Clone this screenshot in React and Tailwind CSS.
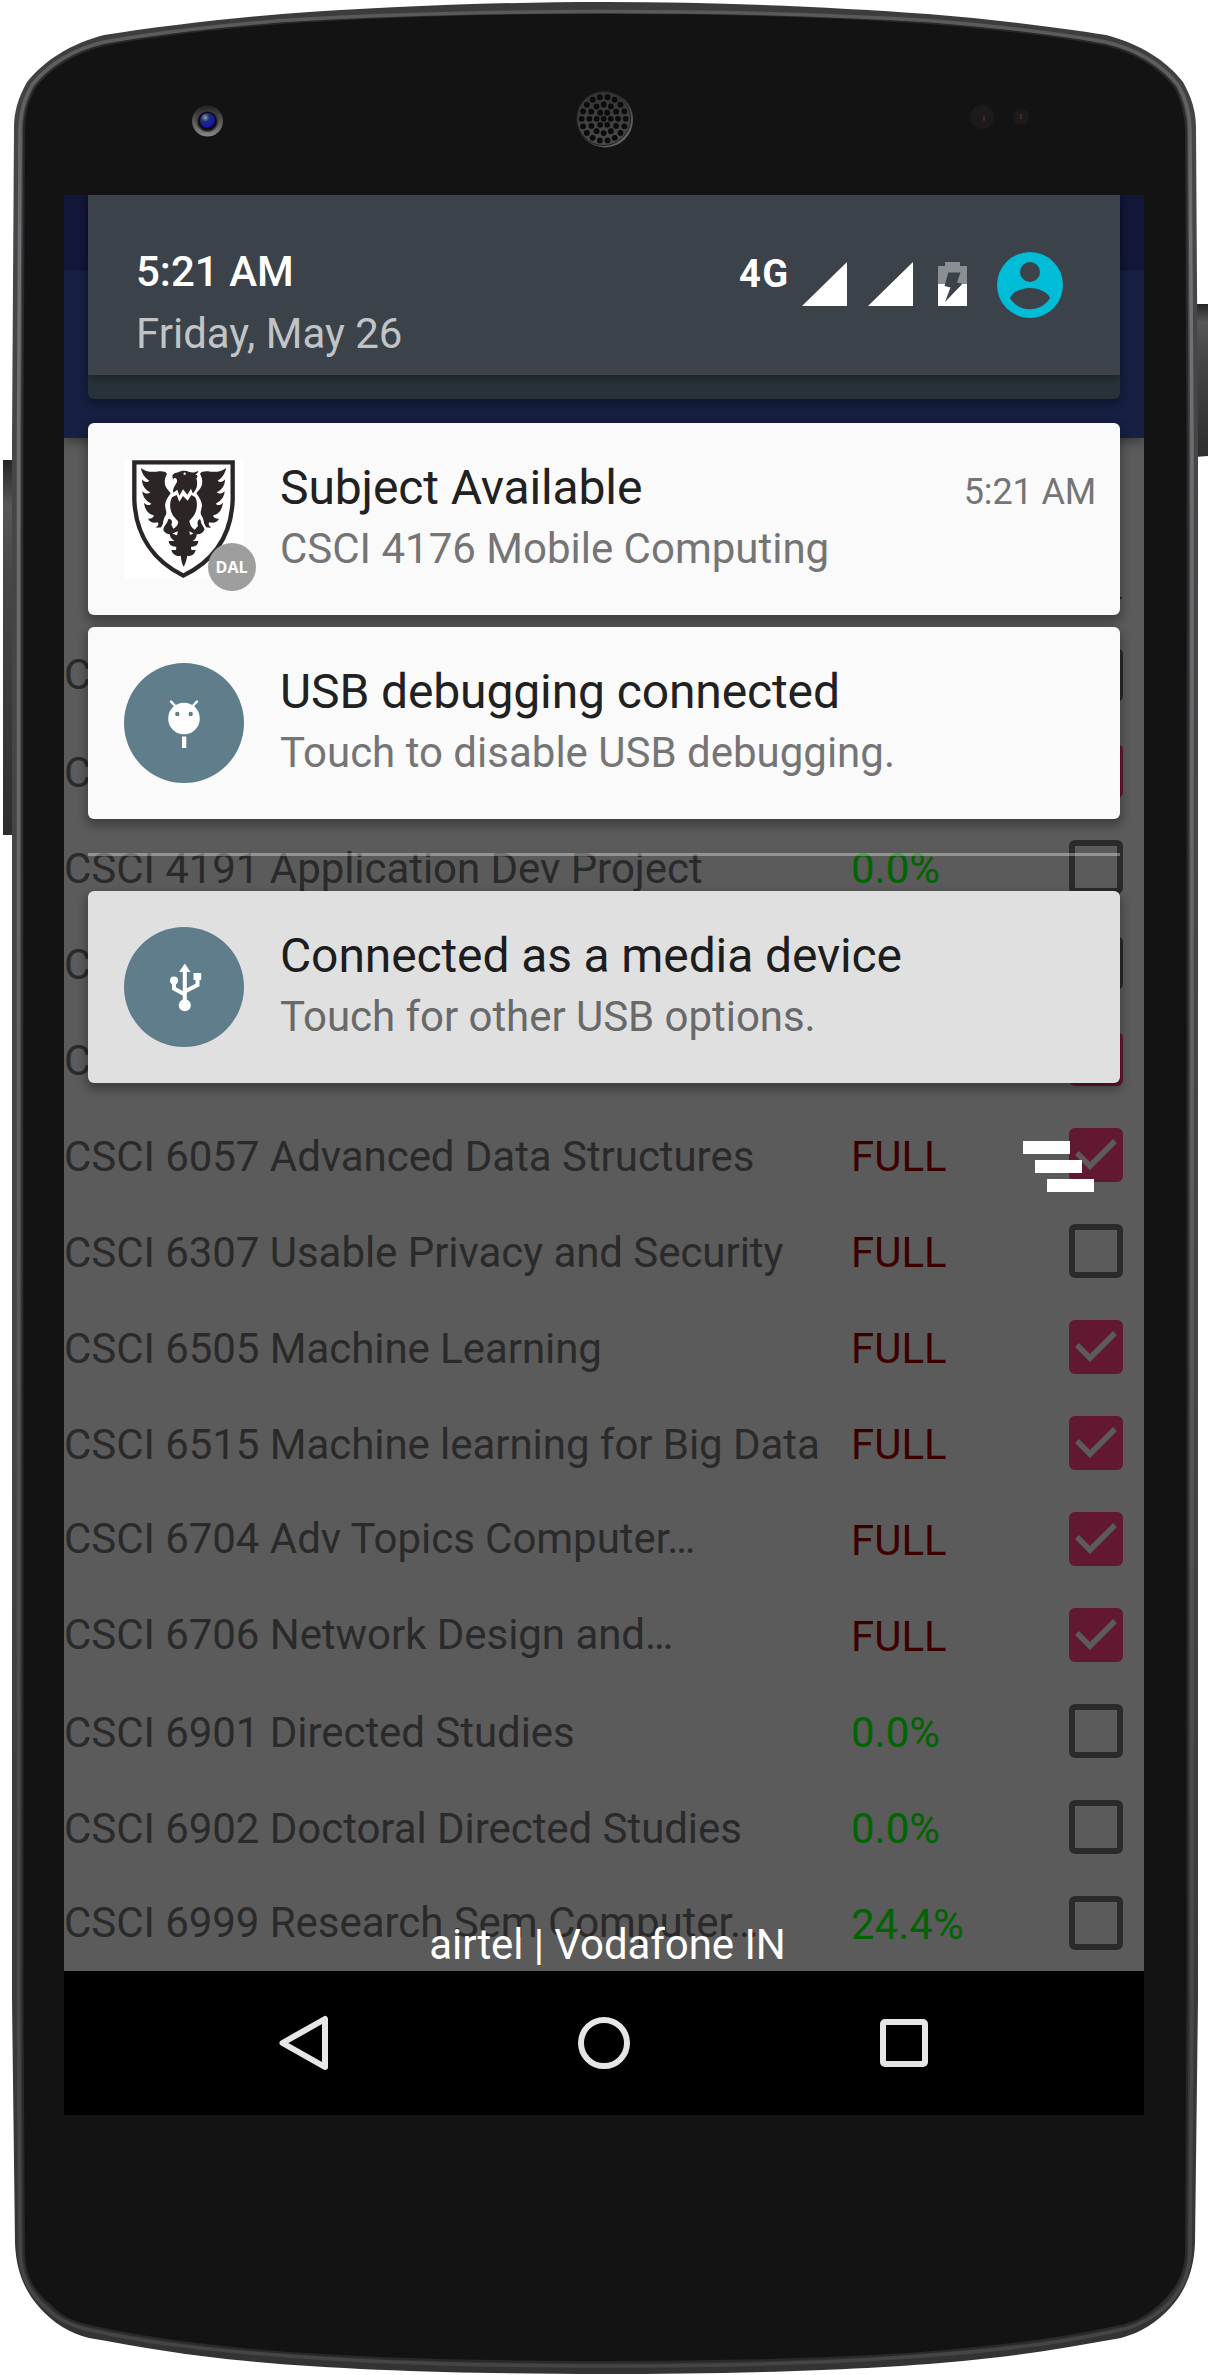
import React from "react";

const courses = [
  { name: "CSCI", status: "", checked: false, raised: true },
  { name: "CSCI", status: "", checked: true },
  { name: "CSCI 4191 Application Dev Project", status: "0.0%", checked: false },
  { name: "CSCI", status: "", checked: false },
  { name: "CSCI", status: "", checked: true },
  { name: "CSCI 6057 Advanced Data Structures", status: "FULL", checked: true },
  { name: "CSCI 6307 Usable Privacy and Security", status: "FULL", checked: false },
  { name: "CSCI 6505 Machine Learning", status: "FULL", checked: true },
  { name: "CSCI 6515 Machine learning for Big Data", status: "FULL", checked: true },
  { name: "CSCI 6704 Adv Topics Computer…", status: "FULL", checked: true, raised: true },
  { name: "CSCI 6706 Network Design and…", status: "FULL", checked: true, raised: true },
  { name: "CSCI 6901 Directed Studies", status: "0.0%", checked: false },
  { name: "CSCI 6902 Doctoral Directed Studies", status: "0.0%", checked: false },
  { name: "CSCI 6999 Research Sem Computer…", status: "24.4%", checked: false, raised: true },
];

function speakerHoles() {
  const holes = [[0, 0]];
  [[6, 7], [12, 14.3], [18, 22]].forEach(([count, r]) => {
    for (let i = 0; i < count; i++) {
      const a = (i / count) * Math.PI * 2;
      holes.push([r * Math.cos(a), r * Math.sin(a)]);
    }
  });
  return holes;
}

function PhoneBody() {
  return (
    <svg className="absolute inset-0" width="1210" height="2375" viewBox="0 0 1210 2375" aria-hidden="true">
      <defs>
        <linearGradient id="edge" x1="0" y1="0" x2="0" y2="1">
          <stop offset="0" stopColor="#3b3b3c" />
          <stop offset="0.06" stopColor="#464648" />
          <stop offset="0.6" stopColor="#444446" />
          <stop offset="1" stopColor="#333334" />
        </linearGradient>
        <linearGradient id="shine" x1="0" y1="0" x2="0" y2="1">
          <stop offset="0" stopColor="#59595c" />
          <stop offset="0.1" stopColor="#717175" />
          <stop offset="0.35" stopColor="#68686b" />
          <stop offset="0.75" stopColor="#4a4a4c" />
          <stop offset="1" stopColor="#454546" />
        </linearGradient>
        <linearGradient id="key" x1="0" y1="0" x2="0" y2="1">
          <stop offset="0" stopColor="#252525" />
          <stop offset="0.12" stopColor="#575757" />
          <stop offset="0.3" stopColor="#484848" />
          <stop offset="1" stopColor="#2d2d2d" />
        </linearGradient>
        <linearGradient id="lens" x1="0" y1="0" x2="0" y2="1">
          <stop offset="0" stopColor="#222" />
          <stop offset="1" stopColor="#8a8886" />
        </linearGradient>
        <radialGradient id="glass" cx="0.35" cy="0.3" r="0.8">
          <stop offset="0" stopColor="#8f9cb4" />
          <stop offset="0.35" stopColor="#22306a" />
          <stop offset="0.75" stopColor="#1713b8" />
          <stop offset="1" stopColor="#0b0a30" />
        </radialGradient>
        <linearGradient id="grille" x1="0" y1="0" x2="1" y2="1">
          <stop offset="0" stopColor="#1c1c1c" />
          <stop offset="1" stopColor="#707070" />
        </linearGradient>
        <linearGradient id="mesh" x1="0" y1="0" x2="0" y2="1">
          <stop offset="0" stopColor="#333" />
          <stop offset="1" stopColor="#4a4a4a" />
        </linearGradient>
      </defs>
      <path d="M15 460H3V835H15Z" fill="url(#key)" />
      <path d="M1195 304H1208V456L1195 457Z" fill="url(#key)" />
      <path d="M605 2C490 2 380 7 282 14C220 19 155 27 104 35C70 44 45 60 27 82C18 98 14 112 14 128L12 440V2000L15 2243C16 2270 24 2290 39 2307C54 2324 70 2333 89 2338C140 2347 190 2356 247 2361C350 2371 490 2374 605 2374C720 2374 860 2371 963 2361C1020 2356 1070 2347 1121 2338C1142 2332 1156 2323 1171 2307C1186 2290 1194 2270 1195 2243L1198 2000V440L1196 128C1196 112 1192 98 1183 82C1166 60 1140 44 1106 35C1055 27 990 19 928 14C830 7 720 2 605 2Z" fill="url(#edge)" />
      <path d="M605 13C490 13 380 16 282 23C220 28 155 35 104 45C75 52 50 68 35 87C27 103 24.5 112 24 130L22.500 440V2000L24 2253C25 2278 34 2292 50 2305C60 2316 70 2321 85 2325C140 2337 190 2345 289 2353C390 2360 490 2362 605 2362C720 2362 820 2360 921 2353C1020 2345 1070 2337 1125 2325C1140 2321 1150 2314 1160 2305C1176 2290 1185 2275 1186 2253L1187.500 2000V440L1186 130C1185.500 112 1182 100 1175 87C1160 68 1135 52 1106 45C1055 35 990 28 928 23C830 16 720 13 605 13Z" fill="#131313" stroke="#29292a" strokeWidth="2" />
      <path d="M605 11.500C490 11.500 380 14.500 282 20.500C220 25.500 155 33 104 42C73 49.500 48 65 32 85C24 100 20.500 112 20 130L18.500 440V2000L20 2253C21 2280 32 2296 47 2309C58 2320 70 2325 85 2329C140 2341 190 2349 289 2356C390 2364 490 2366 605 2366C720 2366 820 2364 921 2356C1020 2349 1070 2341 1125 2329C1142 2324 1152 2318 1163 2309C1180 2294 1189 2278 1190 2253L1192 2000V440L1190 130C1189.500 112 1186 98 1178 85C1162 65 1137 49.500 1106 42C1055 33 990 25.500 928 20.500C830 14.500 720 11.500 605 11.500Z" fill="none" stroke="url(#shine)" strokeWidth="3.500" />
      <circle cx="207.500" cy="121" r="15.500" fill="url(#lens)" />
      <circle cx="207.500" cy="121" r="11" fill="#3a3938" />
      <circle cx="207.500" cy="121" r="9.500" fill="#0c0c14" />
      <circle cx="207.500" cy="120.500" r="7.500" fill="url(#glass)" />
      <circle cx="605" cy="119.500" r="28" fill="url(#grille)" />
      <circle cx="603.700" cy="118.500" r="27" fill="url(#mesh)" stroke="#202020" strokeWidth="1" />
      {speakerHoles().map(([x, y], i) => (
        <circle key={i} cx={603.7 + x} cy={118.8 + y} r="2.900" fill="#0b0b0b" />
      ))}
      <circle cx="982" cy="117" r="12" fill="#1b1b1b" />
      <path d="M984 116v5" stroke="#4a2a18" strokeWidth="2" />
      <circle cx="1021" cy="117" r="8" fill="#1b1b1b" />
      <path d="M1021 114v5" stroke="#4a2a18" strokeWidth="2" />
    </svg>
  );
}

function Checkbox({ checked }) {
  return checked ? (
    <svg width="54" height="54" viewBox="0 0 54 54" aria-hidden="true">
      <rect width="54" height="54" rx="6" fill="#611830" />
      <path d="M8 25L21 38L46 13" fill="none" stroke="#5b5b5b" strokeWidth="5.500" />
    </svg>
  ) : (
    <div className="size-[54px] rounded-md border-6 border-[#2a2a2a]" />
  );
}

function CourseRow({ name, status, checked, raised }) {
  const green = status.endsWith("%");
  return (
    <div className="flex h-24 items-center whitespace-nowrap pr-[21px] text-[42px] leading-[50px]">
      <div className={raised ? "w-[787px] tracking-[-0.05px] text-[#2a2a2a]" : "w-[787px] pt-1 tracking-[-0.05px] text-[#2a2a2a]"}>{name}</div>
      <div className={green ? "flex-1 pt-1 text-[#006400]" : "flex-1 pt-1 text-[#3c0000]"}>{status}</div>
      <Checkbox checked={checked} />
    </div>
  );
}

function Crest() {
  const wing = (
    <path d="M93 84C105 94 120 97 140 95C155 93 166 94 171 101C163 115 161 133 171 146L182 160C173 172 166 184 165 196C166 208 171 215 168 224C160 236 157 250 160 262L137 263C145 257 147 252 143 247C130 251 119 246 114 236C124 236 132 232 131 226C116 224 105 211 102 188C109 196 119 197 124 191C108 184 98 170 97 154C105 162 115 163 121 157C104 149 96 136 96 118C103 127 112 128 118 122C104 113 95 100 93 84Z" />
  );
  return (
    <svg width="120" height="120" viewBox="42 57 360 360" aria-hidden="true">
      <rect x="42" y="57" width="360" height="360" fill="#fff" />
      <path d="M73 67H368V180C364 285 312 362 220 407C130 362 77 285 73 180Z" fill="#fff" stroke="#2b2526" strokeWidth="13" />
      <g fill="#2b2526">
        {wing}
        <g transform="matrix(-1 0 0 1 441 0)">{wing}</g>
        <path d="M187 109C188 101 197 98 205 97C215 91 228 91 238 96C248 99 257 97 265 92C264 99 260 102 255 103C263 105 265 110 259 115C262 124 262 134 260 142C257 151 252 158 248 160L243 146L232 164L219 148L208 167L202 149L190 158C187 147 194 139 201 126C203 118 198 113 192 114L189 119Z" />
        <path d="M186 172L200 165L208 185L219 168L233 182L244 165L256 172C264 188 262 212 250 229L238 243C240 254 244 263 254 269L264 258C260 246 264 236 274 237C276 249 285 252 284 266C282 276 272 283 262 283C252 283 246 277 238 274L240 285L260 276C262 290 256 299 248 303L265 303C264 316 255 321 243 320L244 330H257C254 343 244 350 232 347C229 360 228 368 221 380C215 370 214 360 212 347C200 351 187 343 184 330H198L199 320C187 321 177 315 176 303H194C184 297 178 289 179 278L201 286L204 274C196 276 188 283 177 283C165 280 157 273 161 263C165 253 172 251 175 237C184 235 189 243 184 254L190 266C198 262 204 254 205 245L190 228C178 210 178 188 186 172Z" />
      </g>
      <g fill="none" stroke="#fff" strokeWidth="7" strokeLinecap="round" strokeLinejoin="round">
        <path d="M183 168C172 182 171 204 181 222C169 224 166 236 165 248C161 255 157 261 155 268" />
        <path d="M258 168C269 182 270 204 260 222C272 224 275 236 277 248L286 264" />
      </g>
      <circle cx="224" cy="101" r="3.500" fill="#fff" />
    </svg>
  );
}

function BugIcon() {
  return (
    <svg width="120" height="120" viewBox="0 0 120 120" aria-hidden="true">
      <circle cx="60" cy="60" r="60" fill="#607d8b" />
      <path d="M47 38.500L53 45M73 38.500L67 45" stroke="#fff" strokeWidth="2.400" strokeLinecap="round" />
      <circle cx="60" cy="55.500" r="15.800" fill="#fff" />
      <circle cx="53.300" cy="51" r="2.200" fill="#607d8b" />
      <circle cx="66.700" cy="51" r="2.200" fill="#607d8b" />
      <rect x="58" y="73.500" width="4.300" height="11.500" fill="#fff" />
    </svg>
  );
}

function UsbIcon() {
  return (
    <svg width="120" height="120" viewBox="0 0 120 120" aria-hidden="true">
      <circle cx="60" cy="60" r="60" fill="#607d8b" />
      <path d="M60.800 78V42M50 53V61.500L60.800 67.500M73.500 51V58L60.800 64.500" fill="none" stroke="#fff" strokeWidth="4" />
      <path d="M60.800 36.500L66.500 45H55Z" fill="#fff" />
      <circle cx="50" cy="53.500" r="4" fill="#fff" />
      <rect x="69.500" y="46" width="7.700" height="7" fill="#fff" />
      <circle cx="60.800" cy="78.300" r="6" fill="#fff" />
    </svg>
  );
}

function Notification({ icon, title, text, time, muted }) {
  return (
    <div
      className={
        muted
          ? "flex h-48 items-start rounded-md bg-[#e0e0e0] pl-9 pr-6 shadow-[0_5px_10px_2px_rgba(0,0,0,0.3)]"
          : "flex h-48 items-start rounded-md bg-[#fafafa] pl-9 pr-6 shadow-[0_5px_10px_2px_rgba(0,0,0,0.3)]"
      }
    >
      <div className="relative mt-9 size-[120px] shrink-0">{icon}</div>
      <div className="ml-9 flex-1 whitespace-nowrap pt-[37px]">
        <div className="flex items-baseline justify-between">
          <div className={muted ? "text-5xl leading-[56px] tracking-[-0.12px] text-[#1d1d1d]" : "text-5xl leading-[56px] tracking-[-0.12px] text-[#212121]"}>{title}</div>
          {time && <div className="text-4xl leading-[42px] tracking-[-0.15px] text-[#757575]">{time}</div>}
        </div>
        <div className={muted ? "mt-2 text-[42px] leading-[50px] tracking-[-0.04px] text-[#696969]" : "mt-2 text-[42px] leading-[50px] text-[#757575]"}>{text}</div>
      </div>
    </div>
  );
}

function StatusIcons() {
  return (
    <div className="flex items-start pr-[57px] pt-[57px]">
      <div className="w-[63px] text-[38px] font-bold leading-[44px] tracking-[1.5px] text-white">4G</div>
      <svg className="mt-[10px]" width="165" height="44" viewBox="0 0 165 44" aria-hidden="true">
        <path d="M45 0V44H0ZM111 0V44H66Z" fill="#fff" />
        <path d="M143 0h15v4h7v18h-29V4h7Z" fill="#8a8f93" />
        <path d="M136 22h29v22h-29Z" fill="#fff" />
        <path d="M146.300 10.500H158.500L155 20.500L160.500 21.700L143 40L148.500 25.500L142.500 24Z" fill="#3b4249" />
      </svg>
      <svg className="ml-[30px]" width="66" height="66" viewBox="0 0 66 66" aria-hidden="true">
        <circle cx="33" cy="33" r="33" fill="#00bcd7" />
        <circle cx="33" cy="20" r="10" fill="#3b4249" />
        <path d="M13 46C16 39 26 36 33 36S50 39 53 46C49 53 41 57.300 33 57.300S17 53 13 46Z" fill="#3b4249" />
      </svg>
    </div>
  );
}

function NotificationShade() {
  return (
    <div className="absolute inset-x-0 top-0 flex h-[1776px] flex-col px-6">
      <div className="h-[204px] rounded-b-md bg-[#263238] shadow-[0_4px_10px_1px_rgba(0,0,0,0.3)]">
        <div className="flex h-[180px] justify-between bg-[#3b4249] shadow-[0_4px_6px_rgba(0,0,0,0.25)]">
          <div className="whitespace-nowrap pl-12 pt-[52px] text-[42px]">
            <div className="font-medium leading-[50px] text-white">5:21 AM</div>
            <div className="mt-3 leading-[50px] text-[#c1c4c6]">Friday, May 26</div>
          </div>
          <StatusIcons />
        </div>
      </div>
      <div className="mt-6 flex flex-col gap-3">
        <Notification
          title="Subject Available"
          text="CSCI 4176 Mobile Computing"
          time="5:21 AM"
          icon={
            <>
              <Crest />
              <div className="absolute left-[84px] top-[84px] flex size-12 items-center justify-center rounded-full bg-[#9e9e9e] pr-px font-['Open_Sans'] text-[16px] font-bold text-white">
                DAL
              </div>
            </>
          }
        />
        <Notification title="USB debugging connected" text="Touch to disable USB debugging." icon={<BugIcon />} />
      </div>
      <div className="mb-[35px] mt-[34px] h-[3px] bg-white/35" />
      <Notification muted title="Connected as a media device" text="Touch for other USB options." icon={<UsbIcon />} />
      <div className="mr-[26px] mt-[58px] flex h-[51px] w-[71px] flex-col justify-between self-end">
        <div className="h-[13px] w-[47px] bg-white" />
        <div className="ml-3 h-[13px] w-[47px] bg-white" />
        <div className="ml-6 h-[13px] w-[47px] bg-white" />
      </div>
      <div className="mb-px mt-auto text-center text-[42px] leading-[50px] tracking-[-0.07px] text-white">
        <span className="ml-[7px]">airtel | Vodafone IN</span>
      </div>
    </div>
  );
}

function NavBar() {
  return (
    <div className="flex h-36 items-center bg-black pl-[211px]">
      <svg width="60" height="60" viewBox="0 0 60 60" aria-hidden="true">
        <path d="M50 6V54L7.500 30Z" fill="none" stroke="#e6e6e6" strokeWidth="6" strokeLinejoin="round" />
      </svg>
      <div className="ml-[243px] size-[52px] rounded-full border-6 border-[#e6e6e6]" />
      <div className="ml-[250px] size-12 rounded-[5px] border-6 border-[#e6e6e6]" />
    </div>
  );
}

export default function App() {
  return (
    <div className="relative h-[2375px] w-[1210px] overflow-hidden bg-white pl-16 pt-[195px] font-['Roboto',sans-serif]">
      <PhoneBody />
      <div className="relative flex h-[1920px] w-[1080px] flex-col overflow-hidden bg-[#5b5b5b]">
        <div className="h-[75px] bg-[#13173a]" />
        <div className="h-[168px] bg-[#171f42] shadow-[0_4px_10px_rgba(0,0,0,0.35)]" />
        <div className="flex h-[189px] items-end justify-end pb-[21px] pr-[21px]">
          <svg width="12" height="12" viewBox="0 0 12 12" aria-hidden="true">
            <path d="M0 3H12L3 12Z" fill="#2a2a2a" />
          </svg>
        </div>
        <div className="flex flex-col">
          {courses.map((course, i) => (
            <CourseRow key={i} {...course} />
          ))}
        </div>
        <NavBar />
        <NotificationShade />
      </div>
    </div>
  );
}
